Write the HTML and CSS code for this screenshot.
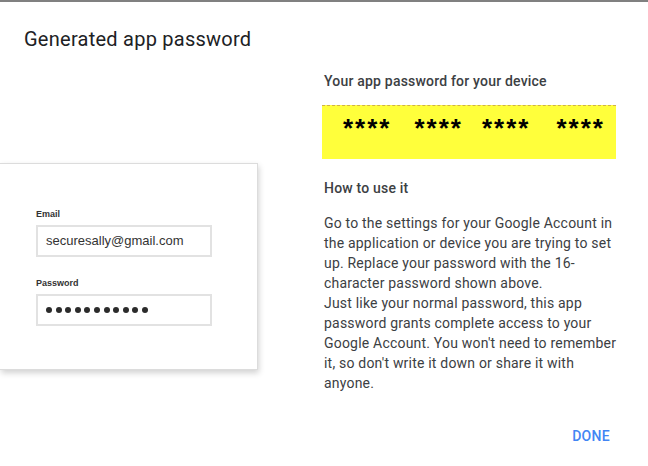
FILE: index.html
```html
<!DOCTYPE html>
<html>
<head>
<meta charset="utf-8">
<link rel="stylesheet" href="styles.css">
</head>
<body>
<div class="dialog">
  <h1 class="title">Generated app password</h1>
  <div class="content">
    <div class="left">
      <div class="card">
        <div class="label">Email</div>
        <div class="input">securesally@gmail.com</div>
        <div class="label label-pw">Password</div>
        <div class="input dots">
          <span class="dot"></span><span class="dot"></span><span class="dot"></span><span class="dot"></span><span class="dot"></span><span class="dot"></span><span class="dot"></span><span class="dot"></span><span class="dot"></span><span class="dot"></span><span class="dot"></span>
        </div>
      </div>
    </div>
    <div class="right">
      <h2 class="heading">Your app password for your device</h2>
      <div class="pwbox">
        <span class="grp g1">****</span><span class="grp g2">****</span><span class="grp g3">****</span><span class="grp g4">****</span>
      </div>
      <h2 class="heading how">How to use it</h2>
      <p class="text">Go to the settings for your Google Account in the application or device you are trying to set up. Replace your password with the 16-character password shown above.<br>Just like your normal password, this app password grants complete access to your Google Account. You won't need to remember it, so don't write it down or share it with anyone.</p>
    </div>
  </div>
  <div class="actions">
    <button class="done">DONE</button>
  </div>
</div>
</body>
</html>
```

FILE: styles.css
```css
html, body {
  margin: 0;
  padding: 0;
  background: #ffffff;
}
body {
  font-family: Roboto, "Liberation Sans", sans-serif;
  color: #3c4043;
}
.dialog {
  width: 648px;
  height: 464px;
  border-top: 2px solid #808080;
  background: #fff;
  overflow: hidden;
}
.title {
  margin: 0;
  padding: 25px 0 0 24px;
  font-size: 20px;
  line-height: 24px;
  font-weight: 400;
  letter-spacing: 0.25px;
  color: #202124;
}
.content {
  display: flex;
  margin-top: 20px;
}
.left {
  width: 324px;
  padding-top: 92px;
}
.card {
  width: 221px;
  margin-left: 0;
  border: 1px solid #dcdcdc;
  border-left: none;
  background: #fff;
  box-shadow: 1px 3px 6px rgba(0,0,0,0.18);
  padding: 44px 0 43px 36px;
  font-family: "Liberation Sans", Arial, sans-serif;
}
.label {
  font-size: 9px;
  line-height: 12px;
  font-weight: 700;
  color: #333;
  margin-bottom: 5px;
}
.label-pw {
  margin-top: 20px;
}
.input {
  box-sizing: border-box;
  width: 176px;
  height: 32px;
  border: 2px solid #e2e2e2;
  padding: 0 0 0 8px;
  font-size: 13px;
  line-height: 28px;
  color: #333;
}
.dots {
  display: flex;
  align-items: center;
  gap: 3.6px;
}
.dot {
  width: 6px;
  height: 6px;
  border-radius: 50%;
  background: #2b2b2b;
}
.right {
  width: 296px;
}
.heading {
  margin: 0;
  font-size: 14px;
  line-height: 20px;
  font-weight: 500;
  color: #3c4043;
  letter-spacing: 0.2px;
}
.pwbox {
  margin: 14px 0 0 -2px;
  width: 294px;
  height: 54px;
  background: #ffff3b;
  border-top: 1px dashed #cfb04a;
  box-sizing: border-box;
  font-family: "Liberation Sans", Arial, sans-serif;
  font-weight: 700;
  font-size: 26px;
  line-height: 44px;
  color: #000;
  white-space: nowrap;
}
.grp {
  display: inline-block;
  letter-spacing: 2px;
}
.g1 { margin-left: 21px; }
.g2 { margin-left: 23px; }
.g3 { margin-left: 19px; }
.g4 { margin-left: 26px; }
.how {
  margin-top: 19px;
}
.text {
  margin: 15px 0 0 0;
  font-size: 14px;
  line-height: 20px;
  letter-spacing: 0.2px;
  color: #3c4043;
}
.actions {
  display: flex;
  justify-content: flex-end;
  padding-right: 38px;
}
.done {
  border: none;
  background: none;
  padding: 0;
  margin-top: 33px;
  font-family: Roboto, "Liberation Sans", sans-serif;
  font-size: 14px;
  line-height: 20px;
  font-weight: 500;
  color: #4285f4;
  letter-spacing: 0.3px;
}
```
